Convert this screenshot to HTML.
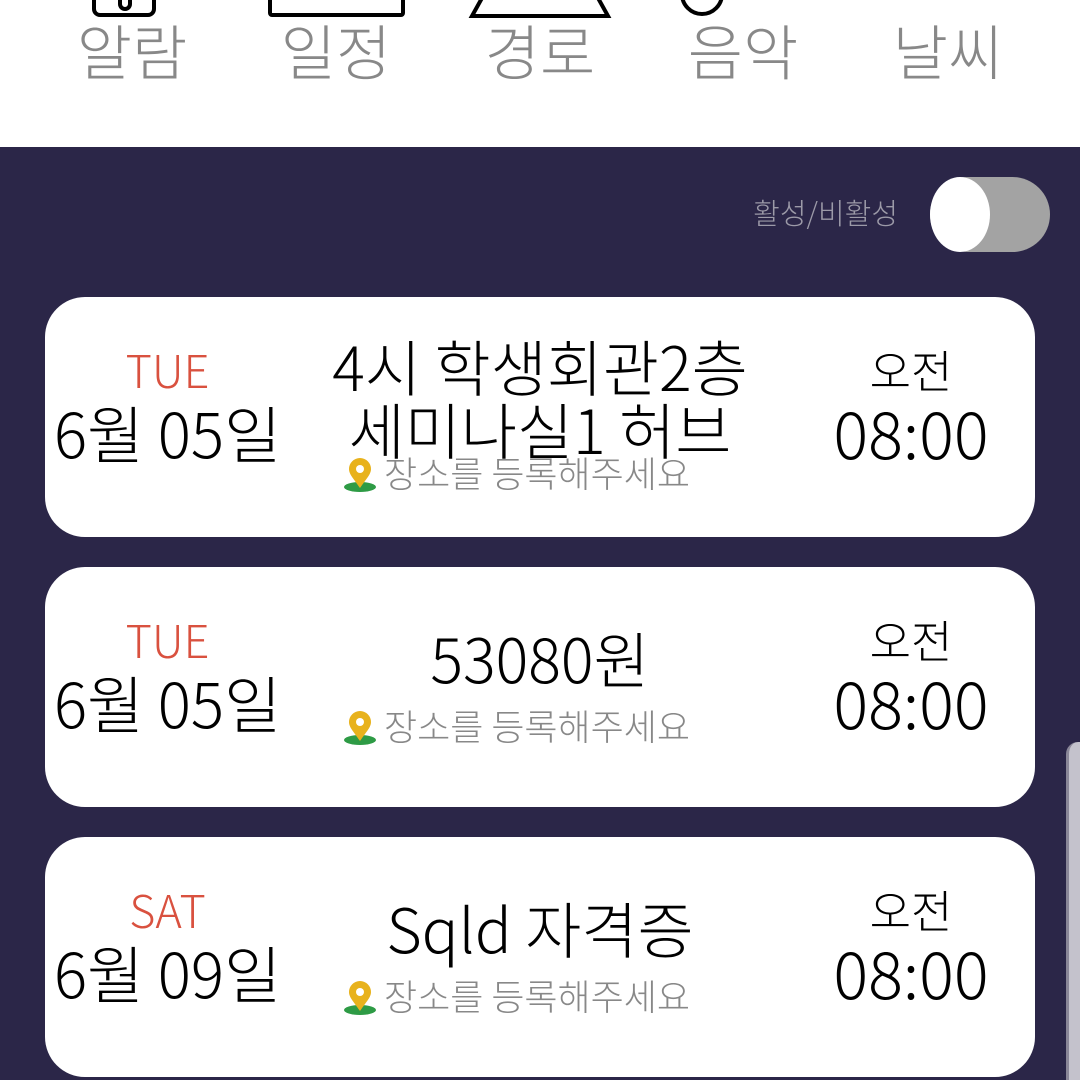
<!DOCTYPE html>
<html><head><meta charset="utf-8"><style>
*{margin:0;padding:0;box-sizing:border-box}
body{width:1080px;height:1080px;overflow:hidden;background:#2b2648;font-family:"Noto Sans CJK KR","Liberation Sans",sans-serif;font-weight:300;position:relative}
.top{position:absolute;left:0;top:0;width:1080px;height:147px;background:#fff}
.nav{position:absolute;top:10px;width:200px;text-align:center;font-size:60px;color:#888;line-height:80px}
.card{position:absolute;left:45px;width:990px;height:240px;background:#fff;border-radius:40px}
.t{position:absolute;text-align:center;white-space:nowrap}
.day{left:0;width:245px;top:47px;font-size:45px;color:#d9513f;line-height:50px}
.date{left:0;width:245px;top:99px;font-size:62px;color:#000;line-height:70px}
.ampm{left:766px;width:200px;top:47px;font-size:45px;line-height:50px;color:#000}
.time{left:766px;width:200px;top:99px;font-size:65px;line-height:70px;color:#000}
.title{left:195px;width:600px;font-size:61px;line-height:63px;color:#000}
.loc{left:298px;font-size:36px;color:#888;line-height:40px;text-align:left}
.loc svg{vertical-align:-5px;margin-right:7px}
</style></head><body>
<div class="top">
<svg width="1080" height="30" style="position:absolute;left:0;top:0">
<g fill="none" stroke="#000" stroke-width="4">
<rect x="94" y="-20" width="60" height="35" rx="6"/>
<path d="M120 -2 v6 a5 5 0 0 0 10 0 v-6"/>
<rect x="270" y="-20" width="133" height="35" rx="2"/>
<path d="M482 -2 L472 16 L608 16 L598 -2"/>
<circle cx="702" cy="-6" r="20"/>
</g></svg>
<div class="nav" style="left:32px">알람</div>
<div class="nav" style="left:236px">일정</div>
<div class="nav" style="left:440px">경로</div>
<div class="nav" style="left:643px">음악</div>
<div class="nav" style="left:848px">날씨</div>
</div>
<div style="position:absolute;left:740px;top:192px;width:158px;text-align:right;font-size:29px;color:#9c9aa8;line-height:40px">활성/비활성</div>
<div style="position:absolute;left:930px;top:177px;width:120px;height:75px;border-radius:38px;background:#a3a3a3"></div>
<div style="position:absolute;left:930px;top:177px;width:60px;height:75px;border-radius:50%;background:#fff"></div>
<div style="position:absolute;left:1066px;top:742px;width:14px;height:338px;background:#c4c2cc;border-left:3px solid #8a8798;border-top-left-radius:12px"></div>

<div class="card" style="top:297px">
<div class="t day">TUE</div><div class="t date">6월 05일</div>
<div class="t title" style="top:36px">4시 학생회관2층</div>
<div class="t title" style="top:99px">세미나실1 허브</div>
<div class="t loc" style="top:155px"><svg width="34" height="34" viewBox="0 0 34 34"><ellipse cx="17" cy="29" rx="16" ry="5" fill="#2e9b45"/><path d="M17 30 C10 20 6 16 6 11 a11 11 0 0 1 22 0 c0 5 -4 9 -11 19z" fill="#e8b21c"/><circle cx="17" cy="11" r="4" fill="#fff"/></svg>장소를 등록해주세요</div>
<div class="t ampm">오전</div><div class="t time">08:00</div>
</div>

<div class="card" style="top:567px">
<div class="t day">TUE</div><div class="t date">6월 05일</div>
<div class="t title" style="top:58px">53080원</div>
<div class="t loc" style="top:138px"><svg width="34" height="34" viewBox="0 0 34 34"><ellipse cx="17" cy="29" rx="16" ry="5" fill="#2e9b45"/><path d="M17 30 C10 20 6 16 6 11 a11 11 0 0 1 22 0 c0 5 -4 9 -11 19z" fill="#e8b21c"/><circle cx="17" cy="11" r="4" fill="#fff"/></svg>장소를 등록해주세요</div>
<div class="t ampm">오전</div><div class="t time">08:00</div>
</div>

<div class="card" style="top:837px">
<div class="t day">SAT</div><div class="t date">6월 09일</div>
<div class="t title" style="top:58px">Sqld 자격증</div>
<div class="t loc" style="top:138px"><svg width="34" height="34" viewBox="0 0 34 34"><ellipse cx="17" cy="29" rx="16" ry="5" fill="#2e9b45"/><path d="M17 30 C10 20 6 16 6 11 a11 11 0 0 1 22 0 c0 5 -4 9 -11 19z" fill="#e8b21c"/><circle cx="17" cy="11" r="4" fill="#fff"/></svg>장소를 등록해주세요</div>
<div class="t ampm">오전</div><div class="t time">08:00</div>
</div>
</body></html>
